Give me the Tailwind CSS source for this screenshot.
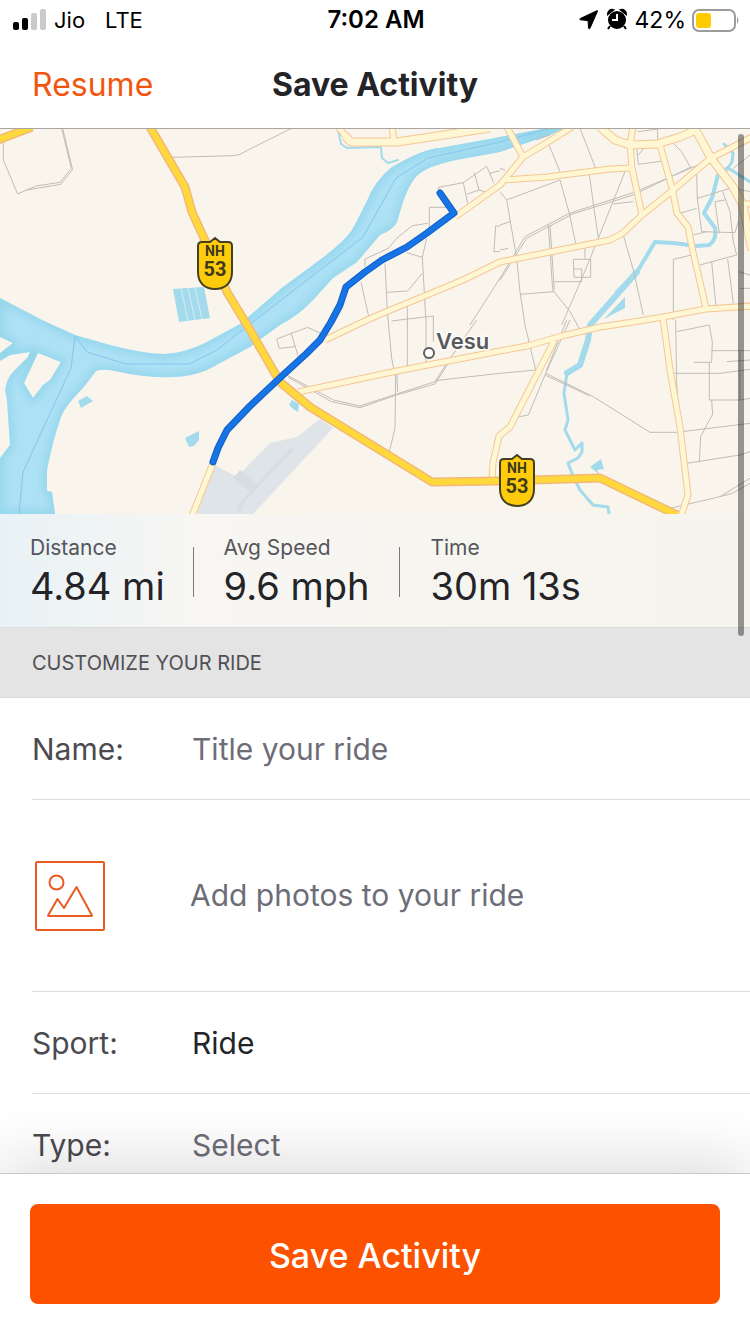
<!DOCTYPE html>
<html lang="en">
<head>
    <meta charset="UTF-8">
    <meta name="viewport" content="width=device-width, initial-scale=1.0">
    <title>Save Activity</title>
    <script src="https://cdn.jsdelivr.net/npm/@tailwindcss/browser@4"></script>
</head>
<body class="flex h-screen flex-col overflow-hidden bg-white font-['Inter','Liberation_Sans',sans-serif] text-[#242428]">

    <!-- status bar -->
    <div class="grid h-10 shrink-0 grid-cols-3 items-center pr-[10px] pl-3 text-[22px] text-black">
        <div class="flex items-center">
            <svg class="mr-2 h-6 w-[34px]" viewBox="0 0 34 24">
                <rect x="1" y="14" width="6" height="8" rx="2"/>
                <rect x="10" y="10" width="6" height="12" rx="2"/>
                <rect x="19" y="5" width="6" height="17" rx="2" fill="#cacaca"/>
                <rect x="28" y="1" width="6" height="21" rx="2" fill="#cacaca"/>
            </svg>
            <span>Jio</span>
            <span class="ml-5">LTE</span>
        </div>
        <div class="text-center text-2xl font-semibold">7:02 AM</div>
        <div class="flex items-center justify-end">
            <svg class="mr-2 h-5 w-5" viewBox="0 0 20 20"><path d="M18.500 1.200 11 18.200q-.8 1.400-1.400 0L9 10.600 1.500 9.800q-1.600-.5 0-1.400L18 .7q.9-.2.5.5z" stroke="#000"/></svg>
            <svg class="mr-2 h-6 w-5" viewBox="0 0 20 24">
                <circle cx="10" cy="12" r="9"/>
                <path d="M1 6a4 4 0 0 1 5-4zM19 6a4 4 0 0 0-5-4zM3 18l-2 3M17 18l2 3" stroke="#000" stroke-width="2"/>
                <path d="M10 6v6H5" fill="none" stroke="#fff" stroke-width="2"/>
            </svg>
            <span class="text-[23px]">42%</span>
            <svg class="ml-1 h-6 w-[50px]" viewBox="0 0 50 24">
                <rect x="3" y="2" width="42" height="21" rx="6" fill="none" stroke="#9b9b9b" stroke-width="2"/>
                <rect x="6" y="5" width="15" height="15" rx="3" fill="#fecb00"/>
                <path d="M47 9q3 3 0 7z" fill="#9b9b9b"/>
            </svg>
        </div>
    </div>

    <!-- nav bar -->
    <header class="grid h-[89px] shrink-0 grid-cols-[1fr_auto_1fr] items-center border-b border-[#a8a5a2] px-8 pt-[2px]">
        <button class="justify-self-start text-[32px] text-[#f2560e]">Resume</button>
        <h1 class="text-[32px] font-bold">Save Activity</h1>
    </header>

    <main class="relative min-h-0 flex-1 overflow-hidden">
        <!-- map -->
        <svg class="block h-[385px] w-full bg-[#f9f5ed]" viewBox="0 129 750 385" preserveAspectRatio="xMidYMid slice" font-family="Inter, 'Liberation Sans', sans-serif">
            <defs>
                <path id="river" d="M0 298 42 320 75 335 110 345Q145 354 165 354 185 353 205 343L240 324 283 287 317 262Q343 243 352 230 360 215 366 203 375 180 392 167 425 148 440 148L500 137 547 128H565L550 135 500 152 467 158Q425 165 415 178 408 187 403 202L397 222Q393 230 380 235L357 262 345 270 333 278 313 300Q298 316 280 325L250 347 207 370Q190 377 173 377 145 378 120 372 103 368 96 371L83 388Q63 408 60 420 52 443 47 470V491L52 492 55 514H0V458L10 445 7 400 5 390Q7 378 13 372L28 357 30 352 10 355 0 361V353L13 343 0 337ZM38 353 30 370 24 383 33 398 43 385 50 380 61 362Z"/>
                <clipPath id="riverClip"><use href="#river" clip-rule="evenodd"/></clipPath>
                <filter id="soft"><feGaussianBlur stdDeviation="4"/></filter>
                <g id="roads">
                    <path d="M325 340 367 320 388 311 427 295 463 280 500 262 550 252 610 240 623 233 642 215 673 190 693 173 711 158 727 150 752 137"/>
                    <path d="M455 217 500 185 523 157 543 145 572 127M503 180 547 177 610 169 632 168M507 127 523 157"/>
                    <path d="M633 127 630 145 632 168 642 215"/>
                    <path d="M660 145 672 188 677 213 688 227 693 252 706 308"/>
                    <path d="M298 392 397 371 500 351 527 346 562 336 600 327 633 322 663 317 706 309 752 306"/>
                    <path d="M663 318 670 370 680 427 688 495 681 516M554 341 510 427 499 436 493 463 492 480"/>
                    <path d="M338 127 351 142M392 127 394 141M213 463 192 516M743 204H752"/>
                </g>
                <path id="trunk" d="M693 125 711 158 733 187 743 205 752 250M600 127 615 140 630 145 657 144 680 137 698 129M345 136 351 142H397L490 128"/>
                <path id="highway" d="M150 127 185 187 192 212 213 258 227 292 250 330 280 382 310 407 432 482 500 481 600 478 677 515M-2 140 32 127"/>
                <path id="route" d="M440 193 454 213 427 233 407 247 382 260 365 272 346 287 340 305 331 322 320 340 306 354 283 375 250 406 227 430 218 448 213 462"/>
                <path id="shield" d="M5 4H13L18 0 23 4H31Q35 4 35 8V34C35 46 27 51 18 51S1 46 1 34V8Q1 4 5 4Z" fill="#ffcc0b" stroke="#44401f" stroke-width="2"/>
            </defs>

            <!-- airport -->
            <path d="M213 464 197 514H253L333 428 320 419 297 437 270 443 237 477Z" fill="#dfe4e8"/>
            <path d="M240 514 237 506 290 448 294 450 270 474 246 500ZM233 478 240 470 258 485 250 492Z" fill="#d7dde1"/>

            <!-- water -->
            <use href="#river" fill="#aee1f6" fill-rule="evenodd"/>
            <g clip-path="url(#riverClip)"><use href="#river" fill="none" stroke="#93d5ea" stroke-width="8" filter="url(#soft)"/></g>
            <path d="M19 514 23 472 71 368 75 336 87 352 126 364H189L217 350 250 324 363 237 396 178 428 158 500 142 548 129" fill="none" stroke="#86c5ee"/>
            <g fill="#a3daec">
                <path d="M173 289 204 287 210 318 179 322ZM78 401 87 396 93 401 81 408ZM185 438 199 431V440L194 446 189 447ZM289 405 292 400 299 404 298 412 293 409ZM590 467 601 459 604 469 597 470 600 475ZM604 319 625 297V308Z"/>
            </g>
            <path d="M181 288 188 321M188 288 195 320M195 288 202 319" stroke="#d5edf3" fill="none"/>
            <g fill="none" stroke="#a3daec" stroke-linejoin="round" stroke-linecap="round">
                <path d="M338 130 341 144 347 148 381 147 382 158 388 163 398 160" stroke-width="2"/>
                <path d="M724 144 733 153 732 162 728 168M728 168 752 183" stroke-width="3"/>
                <path d="M728 168 718 175 712 198 704 213 715 228Q717 240 709 245L697 246 673 243 655 242 637 272 617 292" stroke-width="4"/>
                <path d="M637 272 590 325 588 340 580 365 567 373" stroke-width="6"/>
                <path d="M567 373 564 393 568 420 565 430 575 450 582 443V452L578 458 568 463 573 476 580 490 593 505 608 507 609 514" stroke-width="3"/>
            </g>

            <!-- minor streets, drawn on a grid three times finer than the map -->
            <g fill="none" stroke="#c0bcb6" stroke-width="3">
                <path transform="translate(0 125) scale(.3333)" d="M10 50V105L53 207 108 183 180 172 214 130 185 10M75 196 182 178 218 134 188 10M515 97 700 92 720 88 750 72 875 10"/>
                <path transform="translate(250 125) scale(.3333)" d="M566 200V187L640 173 710 124 732 175M640 173 653 235M673 143 687 195 650 208M687 195 710 202M720 145 750 137M590 247H538V320M533 295 487 302 440 340 415 370 345 402V425M530 340 517 397 527 575M470 383 517 397M517 445 473 498 410 502M405 415 412 560 425 700 437 760 435 910 417 985M333 472 356 573M472 540V730M425 588 550 573V650M437 750 472 730 528 728V575M750 303H737L732 380H750M750 460 660 600"/>
                <path transform="translate(500 125) scale(.3333)" d="M0 200 20 225 50 400 60 500 75 600 107 735M20 225 180 165M145 55 180 140M108 45 150 30M270 150 285 125 240 10M180 165 208 265 228 360M268 148 282 250 295 340 375 140M208 265 400 203 630 105M208 270 400 210 575 125M208 265 75 335 0 460M212 270 80 340 0 466M340 237 400 230M370 330 400 435 430 570M145 300 158 495 210 560 243 620M150 300 163 495M63 508 163 500M295 340 250 450 185 600M220 403H272V457H222ZM220 432H245V470H163M255 370V403M410 70 415 118 490 108M440 60 415 90M415 20 473 12V57M520 55 545 80 570 125M590 150 592 220 605 320 705 323 715 290M592 220 690 190M645 230 658 325M668 200 690 260 700 350 710 390 600 420M645 230 675 225M540 265 590 250M580 330 620 320M520 585V403L575 390M635 410 648 545M683 402 700 535M715 440 750 450M720 490H750M700 190 750 200M700 130 750 90M0 300 30 290M0 130 15 135M0 375 25 370"/>
                <path transform="translate(500 320) scale(.3333)" d="M0 160 107 150M210 0 135 165 85 285 48 292M200 0 140 150M137 160 280 230 450 337H530L750 310M137 166 270 228M527 0 530 190 540 330M530 35 628 15 637 65 635 127H582M635 92H750M628 127V240H720V92M520 160H660L750 148M635 240 638 282 602 350 598 427M560 430 720 405 750 395M720 240 750 235M510 565 660 530 750 475M660 530 697 520 750 490M680 125 750 120"/>
                <path transform="translate(250 320) scale(.3333)" d="M88 85 80 57 173 22 215 42M88 85 135 80M123 38 145 110M110 165 250 240 330 258 440 222 555 185 590 130 680 0M115 172 245 245 330 263 440 225 555 192 595 130M555 182 750 160M440 150 443 215"/>
            </g>

            <g fill="none" stroke-linejoin="round">
                <use href="#roads" stroke="#f4c795" stroke-width="7"/>
                <use href="#trunk" stroke="#f4c795" stroke-width="9"/>
                <use href="#roads" stroke="#fff6d3" stroke-width="5"/>
                <use href="#trunk" stroke="#fff6d3" stroke-width="7"/>
                <use href="#highway" stroke="#f3b878" stroke-width="9"/>
                <use href="#highway" stroke="#ffd93b" stroke-width="6"/>
            </g>

            <!-- recorded route -->
            <g fill="none" stroke-linejoin="round" stroke-linecap="round">
                <use href="#route" stroke="#0f5fc4" stroke-width="7"/>
                <use href="#route" stroke="#1674e6" stroke-width="5"/>
            </g>

            <g fill="#3d3a1d" text-anchor="middle" font-family="'Liberation Sans Narrow', Roboto, sans-serif" font-weight="700">
                <use href="#shield" x="197" y="238"/>
                <text x="215" y="256" font-size="14">NH</text>
                <text x="215" y="276" font-size="20">53</text>
                <use href="#shield" x="499" y="455"/>
                <text x="517" y="473" font-size="14">NH</text>
                <text x="517" y="493" font-size="20">53</text>
            </g>

            <circle cx="429" cy="353" r="5" fill="#fff" stroke="#5c5c5c" stroke-width="2"/>
            <text x="436" y="349" font-size="22" font-weight="600" fill="#5a5a5a" stroke="#fff" stroke-width="3" paint-order="stroke">Vesu</text>
        </svg>

        <!-- ride totals -->
        <dl class="flex h-[113px] items-center bg-linear-to-r from-[#e8f2f6] via-[#f7f6f3] via-25% to-[#f6f4ec] px-[30px] pt-[2px]">
            <div class="pr-[28px]">
                <dt class="text-[21px] leading-7 text-[#55555b]">Distance</dt>
                <dd class="text-[38px] leading-[48px]">4.84 mi</dd>
            </div>
            <div class="h-[50px] w-px bg-[#77777d]"></div>
            <div class="px-[30px]">
                <dt class="text-[21px] leading-7 text-[#55555b]">Avg Speed</dt>
                <dd class="text-[38px] leading-[48px]">9.6 mph</dd>
            </div>
            <div class="h-[50px] w-px bg-[#77777d]"></div>
            <div class="px-[30px]">
                <dt class="text-[21px] leading-7 text-[#55555b]">Time</dt>
                <dd class="text-[38px] leading-[48px]">30m 13s</dd>
            </div>
        </dl>

        <h2 class="flex h-[71px] items-center border-y border-[#dcdcdc] bg-[#e4e4e4] px-8 text-[20px] text-[#505056]">CUSTOMIZE YOUR RIDE</h2>

        <form class="pl-8 text-[30px]">
            <div class="flex h-[102px] items-center border-b border-[#dedede] pt-[2px]">
                <label for="name" class="w-40 text-[#4a4a50]">Name:</label>
                <input id="name" type="text" placeholder="Title your ride" class="min-w-0 flex-1 outline-none placeholder:text-[#6d6d78]">
            </div>
            <button type="button" class="flex h-48 w-full items-center border-b border-[#dedede] text-left text-[#6d6d78]">
                <svg class="mr-[83px] ml-[2px] h-[72px] w-[73px]" viewBox="0 0 73 72" fill="none" stroke="#ea5b22" stroke-width="2" stroke-linejoin="round">
                    <rect x="2" y="2" width="68" height="68" rx="1"/>
                    <circle cx="22.500" cy="22.500" r="7"/>
                    <path d="M14 55.500 23.500 39 30 48 42.500 27 58 55.500Q58 56 57 56H15Q14 56 14 55.500Z"/>
                </svg>
                Add photos to your ride
            </button>
            <div class="flex h-[102px] items-center border-b border-[#dedede] pt-[2px]">
                <label for="sport" class="w-40 text-[#4a4a50]">Sport:</label>
                <select id="sport" class="flex-1 appearance-none"><option>Ride</option></select>
            </div>
            <div class="flex h-[102px] items-center">
                <label for="type" class="w-40 text-[#4a4a50]">Type:</label>
                <select id="type" class="flex-1 appearance-none text-[#6d6d78]"><option>Select</option></select>
            </div>
        </form>

        <!-- scroll indicator -->
        <div class="absolute top-[5px] right-[6px] h-[502px] w-[6px] rounded-full bg-black/40"></div>
    </main>

    <footer class="relative shrink-0 border-t border-[#c8c8c8] bg-white p-[30px] shadow-[0_-12px_64px_rgba(0,0,0,0.14)]">
        <button class="h-[100px] w-full rounded-lg bg-[#fc5200] pt-[2px] text-[34px] font-medium text-white">Save Activity</button>
    </footer>

</body>
</html>
